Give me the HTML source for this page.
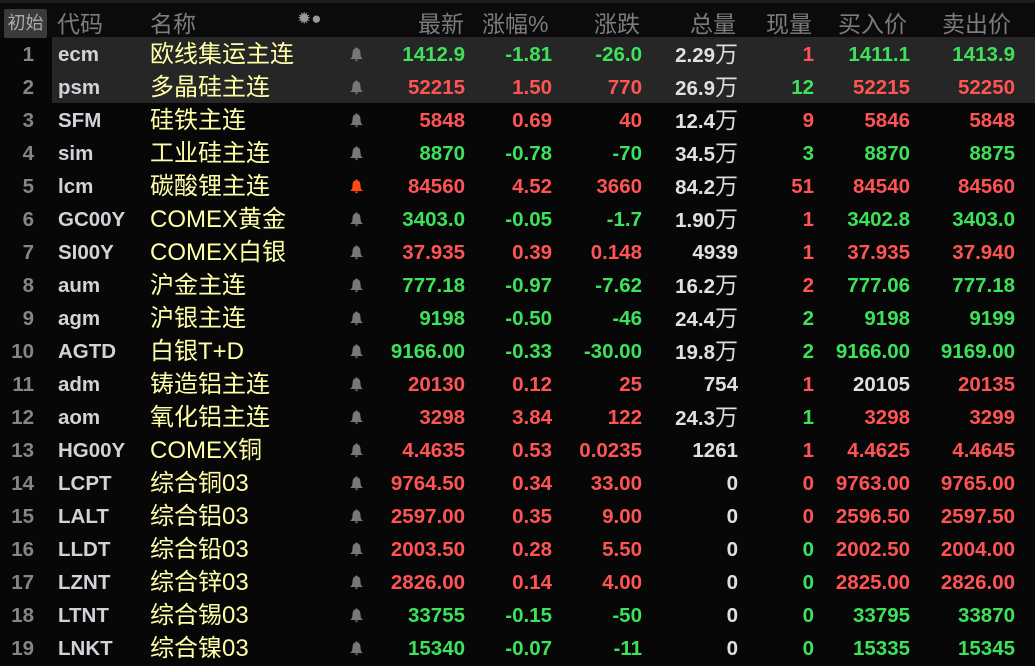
<!DOCTYPE html>
<html><head><meta charset="utf-8"><style>
body{margin:0;background:#070707;width:1035px;height:663px;overflow:hidden;font-family:"Liberation Sans","Noto Sans CJK SC",sans-serif}
.top{position:absolute;left:0;top:0;width:1035px;height:3px;background:#1c1c1c}
.hd{position:absolute;left:0;top:3px;width:1035px;height:34px;background:#0b0b0b;color:#7c7c7c;font-size:23px}
.hd span{position:absolute;top:2px;white-space:nowrap}
.btn{position:absolute;left:4px;top:6px;width:43px;height:29px;background:#3a3a3a;border-radius:2px;color:#aaa;font-size:18px;line-height:29px;text-align:center}
.r{position:absolute;left:0;width:1035px;height:33px;font-weight:bold;font-size:20.5px;line-height:35px}
.r span{position:absolute;top:0;white-space:nowrap}
.sel{background:#262626}
.n{left:0;width:34px;text-align:right;color:#858585}
.c{left:58px;color:#d2d2d8}
.m{left:150px;color:#ffffa8;font-weight:normal;font-size:24px}
.b{position:absolute;left:349px;top:9px;width:15px;height:16px}
.a{left:370px;width:95px;text-align:right}
.p{left:470px;width:82px;text-align:right}
.d{left:560px;width:82px;text-align:right}
.v{left:640px;width:98px;text-align:right;color:#e0e0e0}
.v i{font-style:normal;font-weight:normal;font-size:23px;color:#ddd}
.x{left:750px;width:64px;text-align:right}
.y{left:820px;width:90px;text-align:right}
.z{left:920px;width:95px;text-align:right}
.g{color:#3de25a}.e{color:#ff5454}.w{color:#e0e0e0}
</style></head><body>
<div class="top"></div>
<div class="hd"><div class="btn">初始</div>
<span style="left:57px">代码</span><span style="left:150px">名称</span>
<span style="left:297px;font-size:17px;top:6px;color:#999">✹●</span>
<span style="left:418px">最新</span><span style="left:482px">涨幅%</span><span style="left:594px">涨跌</span>
<span style="left:690px">总量</span><span style="left:766px">现量</span><span style="left:838px">买入价</span><span style="left:942px">卖出价</span></div>
<div class="r sel" style="top:37px;left:52px;width:983px"></div>
<div class="r sel" style="top:70px;left:52px;width:983px"></div>

<div class="r" style="top:37px"><span class="n">1</span><span class="c">ecm</span><span class="m">欧线集运主连</span><svg class="b" viewBox="0 0 15 16" fill="#777"><path d="M7.5 1 L8.5 2.3 C11 3 11.5 5.5 11.5 8 L12 11 L14 13 L1 13 L3 11 L3.5 8 C3.5 5.5 4 3 6.5 2.3 Z M5.5 13.5 L9.5 13.5 L7.5 15.5 Z"/></svg><span class="a g">1412.9</span><span class="p g">-1.81</span><span class="d g">-26.0</span><span class="v">2.29<i>万</i></span><span class="x e">1</span><span class="y g">1411.1</span><span class="z g">1413.9</span></div>
<div class="r" style="top:70px"><span class="n">2</span><span class="c">psm</span><span class="m">多晶硅主连</span><svg class="b" viewBox="0 0 15 16" fill="#777"><path d="M7.5 1 L8.5 2.3 C11 3 11.5 5.5 11.5 8 L12 11 L14 13 L1 13 L3 11 L3.5 8 C3.5 5.5 4 3 6.5 2.3 Z M5.5 13.5 L9.5 13.5 L7.5 15.5 Z"/></svg><span class="a e">52215</span><span class="p e">1.50</span><span class="d e">770</span><span class="v">26.9<i>万</i></span><span class="x g">12</span><span class="y e">52215</span><span class="z e">52250</span></div>
<div class="r" style="top:103px"><span class="n">3</span><span class="c">SFM</span><span class="m">硅铁主连</span><svg class="b" viewBox="0 0 15 16" fill="#777"><path d="M7.5 1 L8.5 2.3 C11 3 11.5 5.5 11.5 8 L12 11 L14 13 L1 13 L3 11 L3.5 8 C3.5 5.5 4 3 6.5 2.3 Z M5.5 13.5 L9.5 13.5 L7.5 15.5 Z"/></svg><span class="a e">5848</span><span class="p e">0.69</span><span class="d e">40</span><span class="v">12.4<i>万</i></span><span class="x e">9</span><span class="y e">5846</span><span class="z e">5848</span></div>
<div class="r" style="top:136px"><span class="n">4</span><span class="c">sim</span><span class="m">工业硅主连</span><svg class="b" viewBox="0 0 15 16" fill="#777"><path d="M7.5 1 L8.5 2.3 C11 3 11.5 5.5 11.5 8 L12 11 L14 13 L1 13 L3 11 L3.5 8 C3.5 5.5 4 3 6.5 2.3 Z M5.5 13.5 L9.5 13.5 L7.5 15.5 Z"/></svg><span class="a g">8870</span><span class="p g">-0.78</span><span class="d g">-70</span><span class="v">34.5<i>万</i></span><span class="x g">3</span><span class="y g">8870</span><span class="z g">8875</span></div>
<div class="r" style="top:169px"><span class="n">5</span><span class="c">lcm</span><span class="m">碳酸锂主连</span><svg class="b" viewBox="0 0 15 16" fill="#ff4a10"><path d="M7.5 1 L8.5 2.3 C11 3 11.5 5.5 11.5 8 L12 11 L14 13 L1 13 L3 11 L3.5 8 C3.5 5.5 4 3 6.5 2.3 Z M5.5 13.5 L9.5 13.5 L7.5 15.5 Z"/></svg><span class="a e">84560</span><span class="p e">4.52</span><span class="d e">3660</span><span class="v">84.2<i>万</i></span><span class="x e">51</span><span class="y e">84540</span><span class="z e">84560</span></div>
<div class="r" style="top:202px"><span class="n">6</span><span class="c">GC00Y</span><span class="m">COMEX黄金</span><svg class="b" viewBox="0 0 15 16" fill="#777"><path d="M7.5 1 L8.5 2.3 C11 3 11.5 5.5 11.5 8 L12 11 L14 13 L1 13 L3 11 L3.5 8 C3.5 5.5 4 3 6.5 2.3 Z M5.5 13.5 L9.5 13.5 L7.5 15.5 Z"/></svg><span class="a g">3403.0</span><span class="p g">-0.05</span><span class="d g">-1.7</span><span class="v">1.90<i>万</i></span><span class="x e">1</span><span class="y g">3402.8</span><span class="z g">3403.0</span></div>
<div class="r" style="top:235px"><span class="n">7</span><span class="c">SI00Y</span><span class="m">COMEX白银</span><svg class="b" viewBox="0 0 15 16" fill="#777"><path d="M7.5 1 L8.5 2.3 C11 3 11.5 5.5 11.5 8 L12 11 L14 13 L1 13 L3 11 L3.5 8 C3.5 5.5 4 3 6.5 2.3 Z M5.5 13.5 L9.5 13.5 L7.5 15.5 Z"/></svg><span class="a e">37.935</span><span class="p e">0.39</span><span class="d e">0.148</span><span class="v">4939</span><span class="x e">1</span><span class="y e">37.935</span><span class="z e">37.940</span></div>
<div class="r" style="top:268px"><span class="n">8</span><span class="c">aum</span><span class="m">沪金主连</span><svg class="b" viewBox="0 0 15 16" fill="#777"><path d="M7.5 1 L8.5 2.3 C11 3 11.5 5.5 11.5 8 L12 11 L14 13 L1 13 L3 11 L3.5 8 C3.5 5.5 4 3 6.5 2.3 Z M5.5 13.5 L9.5 13.5 L7.5 15.5 Z"/></svg><span class="a g">777.18</span><span class="p g">-0.97</span><span class="d g">-7.62</span><span class="v">16.2<i>万</i></span><span class="x e">2</span><span class="y g">777.06</span><span class="z g">777.18</span></div>
<div class="r" style="top:301px"><span class="n">9</span><span class="c">agm</span><span class="m">沪银主连</span><svg class="b" viewBox="0 0 15 16" fill="#777"><path d="M7.5 1 L8.5 2.3 C11 3 11.5 5.5 11.5 8 L12 11 L14 13 L1 13 L3 11 L3.5 8 C3.5 5.5 4 3 6.5 2.3 Z M5.5 13.5 L9.5 13.5 L7.5 15.5 Z"/></svg><span class="a g">9198</span><span class="p g">-0.50</span><span class="d g">-46</span><span class="v">24.4<i>万</i></span><span class="x g">2</span><span class="y g">9198</span><span class="z g">9199</span></div>
<div class="r" style="top:334px"><span class="n">10</span><span class="c">AGTD</span><span class="m">白银T+D</span><svg class="b" viewBox="0 0 15 16" fill="#777"><path d="M7.5 1 L8.5 2.3 C11 3 11.5 5.5 11.5 8 L12 11 L14 13 L1 13 L3 11 L3.5 8 C3.5 5.5 4 3 6.5 2.3 Z M5.5 13.5 L9.5 13.5 L7.5 15.5 Z"/></svg><span class="a g">9166.00</span><span class="p g">-0.33</span><span class="d g">-30.00</span><span class="v">19.8<i>万</i></span><span class="x g">2</span><span class="y g">9166.00</span><span class="z g">9169.00</span></div>
<div class="r" style="top:367px"><span class="n">11</span><span class="c">adm</span><span class="m">铸造铝主连</span><svg class="b" viewBox="0 0 15 16" fill="#777"><path d="M7.5 1 L8.5 2.3 C11 3 11.5 5.5 11.5 8 L12 11 L14 13 L1 13 L3 11 L3.5 8 C3.5 5.5 4 3 6.5 2.3 Z M5.5 13.5 L9.5 13.5 L7.5 15.5 Z"/></svg><span class="a e">20130</span><span class="p e">0.12</span><span class="d e">25</span><span class="v">754</span><span class="x e">1</span><span class="y w">20105</span><span class="z e">20135</span></div>
<div class="r" style="top:400px"><span class="n">12</span><span class="c">aom</span><span class="m">氧化铝主连</span><svg class="b" viewBox="0 0 15 16" fill="#777"><path d="M7.5 1 L8.5 2.3 C11 3 11.5 5.5 11.5 8 L12 11 L14 13 L1 13 L3 11 L3.5 8 C3.5 5.5 4 3 6.5 2.3 Z M5.5 13.5 L9.5 13.5 L7.5 15.5 Z"/></svg><span class="a e">3298</span><span class="p e">3.84</span><span class="d e">122</span><span class="v">24.3<i>万</i></span><span class="x g">1</span><span class="y e">3298</span><span class="z e">3299</span></div>
<div class="r" style="top:433px"><span class="n">13</span><span class="c">HG00Y</span><span class="m">COMEX铜</span><svg class="b" viewBox="0 0 15 16" fill="#777"><path d="M7.5 1 L8.5 2.3 C11 3 11.5 5.5 11.5 8 L12 11 L14 13 L1 13 L3 11 L3.5 8 C3.5 5.5 4 3 6.5 2.3 Z M5.5 13.5 L9.5 13.5 L7.5 15.5 Z"/></svg><span class="a e">4.4635</span><span class="p e">0.53</span><span class="d e">0.0235</span><span class="v">1261</span><span class="x e">1</span><span class="y e">4.4625</span><span class="z e">4.4645</span></div>
<div class="r" style="top:466px"><span class="n">14</span><span class="c">LCPT</span><span class="m">综合铜03</span><svg class="b" viewBox="0 0 15 16" fill="#777"><path d="M7.5 1 L8.5 2.3 C11 3 11.5 5.5 11.5 8 L12 11 L14 13 L1 13 L3 11 L3.5 8 C3.5 5.5 4 3 6.5 2.3 Z M5.5 13.5 L9.5 13.5 L7.5 15.5 Z"/></svg><span class="a e">9764.50</span><span class="p e">0.34</span><span class="d e">33.00</span><span class="v">0</span><span class="x e">0</span><span class="y e">9763.00</span><span class="z e">9765.00</span></div>
<div class="r" style="top:499px"><span class="n">15</span><span class="c">LALT</span><span class="m">综合铝03</span><svg class="b" viewBox="0 0 15 16" fill="#777"><path d="M7.5 1 L8.5 2.3 C11 3 11.5 5.5 11.5 8 L12 11 L14 13 L1 13 L3 11 L3.5 8 C3.5 5.5 4 3 6.5 2.3 Z M5.5 13.5 L9.5 13.5 L7.5 15.5 Z"/></svg><span class="a e">2597.00</span><span class="p e">0.35</span><span class="d e">9.00</span><span class="v">0</span><span class="x e">0</span><span class="y e">2596.50</span><span class="z e">2597.50</span></div>
<div class="r" style="top:532px"><span class="n">16</span><span class="c">LLDT</span><span class="m">综合铅03</span><svg class="b" viewBox="0 0 15 16" fill="#777"><path d="M7.5 1 L8.5 2.3 C11 3 11.5 5.5 11.5 8 L12 11 L14 13 L1 13 L3 11 L3.5 8 C3.5 5.5 4 3 6.5 2.3 Z M5.5 13.5 L9.5 13.5 L7.5 15.5 Z"/></svg><span class="a e">2003.50</span><span class="p e">0.28</span><span class="d e">5.50</span><span class="v">0</span><span class="x g">0</span><span class="y e">2002.50</span><span class="z e">2004.00</span></div>
<div class="r" style="top:565px"><span class="n">17</span><span class="c">LZNT</span><span class="m">综合锌03</span><svg class="b" viewBox="0 0 15 16" fill="#777"><path d="M7.5 1 L8.5 2.3 C11 3 11.5 5.5 11.5 8 L12 11 L14 13 L1 13 L3 11 L3.5 8 C3.5 5.5 4 3 6.5 2.3 Z M5.5 13.5 L9.5 13.5 L7.5 15.5 Z"/></svg><span class="a e">2826.00</span><span class="p e">0.14</span><span class="d e">4.00</span><span class="v">0</span><span class="x g">0</span><span class="y e">2825.00</span><span class="z e">2826.00</span></div>
<div class="r" style="top:598px"><span class="n">18</span><span class="c">LTNT</span><span class="m">综合锡03</span><svg class="b" viewBox="0 0 15 16" fill="#777"><path d="M7.5 1 L8.5 2.3 C11 3 11.5 5.5 11.5 8 L12 11 L14 13 L1 13 L3 11 L3.5 8 C3.5 5.5 4 3 6.5 2.3 Z M5.5 13.5 L9.5 13.5 L7.5 15.5 Z"/></svg><span class="a g">33755</span><span class="p g">-0.15</span><span class="d g">-50</span><span class="v">0</span><span class="x g">0</span><span class="y g">33795</span><span class="z g">33870</span></div>
<div class="r" style="top:631px"><span class="n">19</span><span class="c">LNKT</span><span class="m">综合镍03</span><svg class="b" viewBox="0 0 15 16" fill="#777"><path d="M7.5 1 L8.5 2.3 C11 3 11.5 5.5 11.5 8 L12 11 L14 13 L1 13 L3 11 L3.5 8 C3.5 5.5 4 3 6.5 2.3 Z M5.5 13.5 L9.5 13.5 L7.5 15.5 Z"/></svg><span class="a g">15340</span><span class="p g">-0.07</span><span class="d g">-11</span><span class="v">0</span><span class="x g">0</span><span class="y g">15335</span><span class="z g">15345</span></div>
</body></html>
